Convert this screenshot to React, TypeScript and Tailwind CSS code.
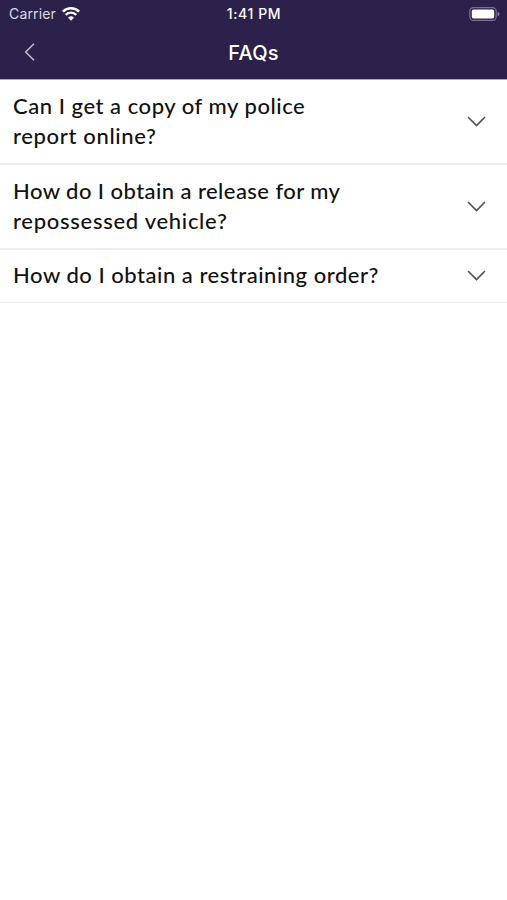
import type { ReactNode } from 'react'

const faqs = [
  { lines: ['Can I get a copy of my police', 'report online?'], row: 'h-[85px] border-b-2 pb-px', spacing: ['tracking-[0.54px]', 'tracking-[0.65px]'] },
  { lines: ['How do I obtain a release for my', 'repossessed vehicle?'], row: 'h-[85px] border-b-2 pb-px', spacing: ['tracking-[0.44px]', 'tracking-[0.71px]'] },
  { lines: ['How do I obtain a restraining order?'], row: 'h-[53px] border-b pb-[2px]', spacing: ['tracking-[0.52px]'] }
]

function WifiIcon() {
  return (
    <svg className="h-[14px] w-[18px]" viewBox="0 0 18 14" fill="none" stroke="white" strokeWidth="2.4">
      <path d="M.9 4.6a11.5 11.5 0 0 1 16.2 0" />
      <path d="M3.7 7.8a7.5 7.5 0 0 1 10.6 0" />
      <path d="M9 13.7 6.1 10.8a4.1 4.1 0 0 1 5.8 0z" fill="white" stroke="none" />
    </svg>
  )
}

function BatteryIcon() {
  return (
    <svg className="h-[14px] w-[31px]" viewBox="0 0 31 14" fill="none">
      <rect x="0.8" y="0.6" width="26.4" height="12.8" rx="3.6" stroke="#77708f" strokeWidth="1.2" />
      <rect x="2.8" y="2.6" width="22.4" height="8.8" rx="1.6" fill="white" />
      <path d="M28.6 4.7c2.4.8 2.4 3.8 0 4.6z" fill="#8c86a3" />
    </svg>
  )
}

function ChevronDown() {
  return (
    <svg className="mt-px h-[11px] w-[19px] shrink-0" viewBox="0 0 19 11" fill="none" stroke="#505050" strokeWidth="1.6">
      <path d="m1 1 8.5 8.5L18 1" />
    </svg>
  )
}

function Header({ children }: { children: ReactNode }) {
  return (
    <header className="h-20 border-b border-[#aaa6bd] bg-[#2b214a] font-['Inter',sans-serif] text-white">
      <div className="grid h-[27px] grid-cols-3 items-center pr-[7px] pl-[9px]">
        <div className="flex items-center gap-[6px] text-[14px] text-[#dedbe5]">
          <span className="tracking-[0.15px]">Carrier</span>
          <WifiIcon />
        </div>
        <span className="text-center text-[14px] font-medium tracking-[0.6px] whitespace-nowrap">
          <span className="-ml-px">1:41 PM</span>
        </span>
        <div className="flex justify-end">
          <BatteryIcon />
        </div>
      </div>
      <div className="grid h-[50px] grid-cols-3 items-center px-6">
        <button type="button" aria-label="Back" className="w-3">
          <svg className="h-[18px] w-[11px]" viewBox="0 0 11 18" fill="none" stroke="#c5c0d1" strokeWidth="1.5">
            <path d="M10 .8 1.7 9l8.3 8.2" />
          </svg>
        </button>
        {children}
      </div>
    </header>
  )
}

export default function App() {
  return (
    <div className="min-h-screen bg-white">
      <Header>
        <h1 className="pt-[2px] text-center text-[20px] leading-7 font-medium tracking-[0.2px]">FAQs</h1>
      </Header>
      <main className="font-['Lato',sans-serif] text-[22px] leading-[30px] font-medium text-[#111111]">
        {faqs.map((faq) => (
          <button
            key={faq.lines[0]}
            type="button"
            className={`flex w-full items-center justify-between border-[#ededed] pr-[21px] pl-[13px] text-left ${faq.row}`}
          >
            <span>
              {faq.lines.map((line, i) => (
                <span key={line} className="block">
                  <span className={faq.spacing[i]}>{line}</span>
                </span>
              ))}
            </span>
            <ChevronDown />
          </button>
        ))}
      </main>
    </div>
  )
}
